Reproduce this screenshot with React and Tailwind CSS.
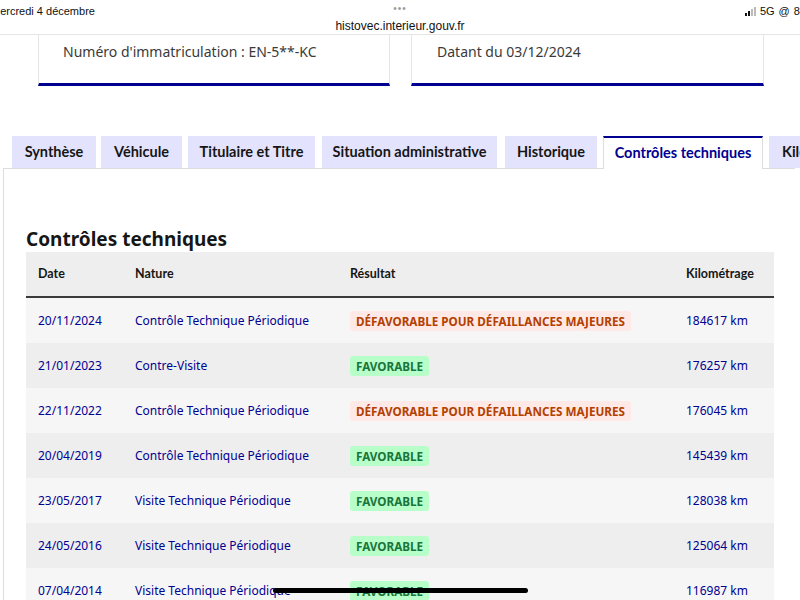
const tabs = [
  { label: "Synthèse", cls: "ml-0 w-[84px]" },
  { label: "Véhicule", cls: "ml-[5px] w-[81px]" },
  { label: "Titulaire et Titre", cls: "ml-[6px] w-[127px]" },
  { label: "Situation administrative", cls: "ml-[7px] w-[175px]" },
  { label: "Historique", cls: "ml-[8px] w-[92px]" },
  { label: "Contrôles techniques", cls: "ml-[6px] w-[160px]", active: true },
  { label: "Kilométrage", cls: "ml-[6px] w-[120px]" },
];

const rows = [
  ["20/11/2024", "Contrôle Technique Périodique", "bad", "184617 km"],
  ["21/01/2023", "Contre-Visite", "ok", "176257 km"],
  ["22/11/2022", "Contrôle Technique Périodique", "bad", "176045 km"],
  ["20/04/2019", "Contrôle Technique Périodique", "ok", "145439 km"],
  ["23/05/2017", "Visite Technique Périodique", "ok", "128038 km"],
  ["24/05/2016", "Visite Technique Périodique", "ok", "125064 km"],
  ["07/04/2014", "Visite Technique Périodique", "ok", "116987 km"],
];

function Badge({ kind }) {
  if (kind === "bad") {
    return (
      <span className="inline-block rounded-[3px] bg-[#ffe9e6] px-[6px] py-[2px] text-[11.7px] font-bold uppercase leading-[16px] text-[#b34000]">
        Défavorable pour défaillances majeures
      </span>
    );
  }
  return (
    <span className="inline-block rounded-[3px] bg-[#b8fec9] px-[6px] py-[2px] text-[11.7px] font-bold uppercase leading-[16px] text-[#18753c]">
      Favorable
    </span>
  );
}

function StatusBar() {
  return (
    <div className="relative h-[35px] border-b border-[#e5e5e5] bg-white font-['Liberation_Sans',sans-serif] text-[#111]">
      <div className="absolute left-[-9px] top-[3px] text-[11px]">mercredi 4 décembre</div>
      <div className="absolute left-0 right-0 top-[1px] text-center text-[10px] tracking-[1px] text-[#9a9a9a]">•••</div>
      <div className="absolute left-0 right-0 top-[17px] text-center text-[12px]">histovec.interieur.gouv.fr</div>
      <div className="absolute right-[-6px] top-[3px] flex items-center gap-[4px] text-[11px]">
        <span className="flex items-end gap-[1px]">
          <span className="h-[3px] w-[2px] bg-[#111]" />
          <span className="h-[5px] w-[2px] bg-[#111]" />
          <span className="h-[7px] w-[2px] bg-[#bbb]" />
          <span className="h-[9px] w-[2px] bg-[#bbb]" />
        </span>
        <span>5G</span>
        <span>@</span>
        <span>84</span>
      </div>
    </div>
  );
}

export default function App() {
  return (
    <div className="relative h-[600px] w-[800px] overflow-hidden bg-white font-['Noto_Sans',sans-serif] text-[#161616]">
      <StatusBar />

      <div className="flex gap-[21px] pl-[38px]">
        <div className="flex h-[51px] w-[352px] items-start border-x border-b-[3px] border-x-[#e5e5e5] border-b-[#000091] pl-[24px] pt-[6px] text-[14px] text-[#3a3a3a]">
          Numéro d'immatriculation : EN-5**-KC
        </div>
        <div className="flex h-[51px] w-[353px] items-start border-x border-b-[3px] border-x-[#e5e5e5] border-b-[#000091] pl-[25px] pt-[6px] text-[14px] text-[#3a3a3a]">
          Datant du 03/12/2024
        </div>
      </div>

      <div className="mt-[50px] flex pl-[12px] font-['Lato',sans-serif]">
        {tabs.map((t) =>
          t.active ? (
            <div
              key={t.label}
              className={`${t.cls} relative z-10 flex h-[33px] shrink-0 items-center justify-center border-x border-t-2 border-x-[#dddddd] border-t-[#000091] bg-white pb-[1px] text-[14.5px] font-bold text-[#000091]`}
            >
              {t.label}
            </div>
          ) : (
            <div
              key={t.label}
              className={`${t.cls} flex h-[32px] shrink-0 items-center whitespace-nowrap bg-[#e3e3fd] text-[14.5px] font-bold text-[#161616] ${t.label === "Kilométrage" ? "justify-start pl-[13px]" : "justify-center"}`}
            >
              {t.label}
            </div>
          )
        )}
      </div>

      <div className="-mt-px ml-[3px] mr-[5px] h-[500px] border-l border-t border-[#dddddd] bg-white pl-[22px] pr-[20px]">
        <h2 className="mt-[58px] text-[19px] font-bold leading-[24px] text-[#161616]">Contrôles techniques</h2>

        <div className="mt-[1px] w-[748px]">
          <div className="grid h-[46px] grid-cols-[97px_215px_336px_100px] items-center border-b-2 border-[#3a3a3a] bg-[#eeeeee] font-['Lato',sans-serif] text-[12.5px] font-bold text-[#161616]">
            <div className="pl-[12px]">Date</div>
            <div className="pl-[12px]">Nature</div>
            <div className="pl-[12px]">Résultat</div>
            <div className="pl-[12px]">Kilométrage</div>
          </div>
          {rows.map((r, i) => (
            <div
              key={r[0]}
              className={`grid h-[45px] grid-cols-[97px_215px_336px_100px] items-center text-[12px] text-[#000091] ${i % 2 === 0 ? "bg-[#f6f6f6]" : "bg-[#eeeeee]"}`}
            >
              <div className="pl-[12px]">{r[0]}</div>
              <div className="pl-[12px] whitespace-nowrap">{r[1]}</div>
              <div className="pl-[12px]">
                <Badge kind={r[2]} />
              </div>
              <div className="pl-[12px]">{r[3]}</div>
            </div>
          ))}
        </div>
      </div>

      <div className="absolute bottom-[7px] left-[273px] h-[5px] w-[255px] rounded-full bg-black" />
    </div>
  );
}
